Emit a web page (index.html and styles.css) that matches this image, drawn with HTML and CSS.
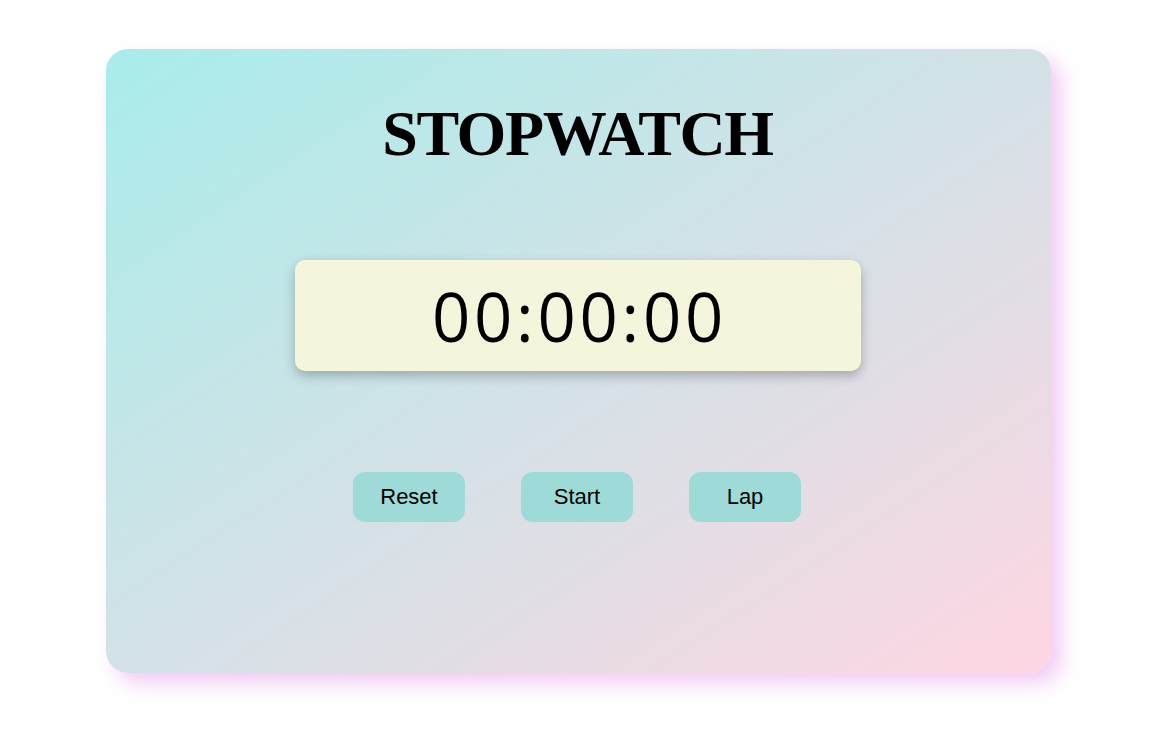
FILE: index.html
```html
<!DOCTYPE html>
<html>
<head>
<meta charset="utf-8">
<link rel="stylesheet" href="styles.css">
</head>
<body>
<div class="card">
  <h1 class="title">STOPWATCH</h1>
  <div class="display">00:00:00</div>
  <div class="buttons">
    <button class="btn">Reset</button>
    <button class="btn">Start</button>
    <button class="btn">Lap</button>
  </div>
</div>
</body>
</html>
```
FILE: styles.css
```css
html, body { margin: 0; padding: 0; background: #fff; }
body { width: 1151px; height: 736px; overflow: hidden; }
.card {
  box-sizing: border-box;
  margin: 49px 0 0 106px;
  width: 945px;
  height: 624px;
  border-radius: 22px;
  background: linear-gradient(to bottom right, #a8edea, #fed6e3);
  box-shadow: 10px 10px 20px rgba(238, 190, 240, 0.8);
  display: flex;
  flex-direction: column;
  align-items: center;
  padding-top: 45px;
  padding-right: 2px;
}
.title {
  margin: 0;
  font-family: "Liberation Serif", serif;
  font-weight: bold;
  font-size: 64px;
  letter-spacing: -1.4px;
  line-height: 80px;
  color: #000;
}
.display {
  margin-top: 86px;
  width: 566px;
  height: 111px;
  box-sizing: border-box;
  background: #f5f5dc;
  border-radius: 10px;
  box-shadow: 0 5px 12px rgba(0, 0, 0, 0.25);
  display: flex;
  align-items: center;
  justify-content: center;
  padding-left: 4px;
  font-family: "Open Sans", sans-serif;
  font-size: 67px;
  letter-spacing: 3.75px;
  color: #000;
}
.buttons {
  margin-top: 101px;
  margin-right: 1px;
  display: flex;
  gap: 56px;
}
.btn {
  width: 112px;
  height: 50px;
  border: none;
  border-radius: 12px;
  background: #9ddad8;
  font-family: "Liberation Sans", sans-serif;
  font-size: 22px;
  color: #000;
  padding: 0;
}
```
